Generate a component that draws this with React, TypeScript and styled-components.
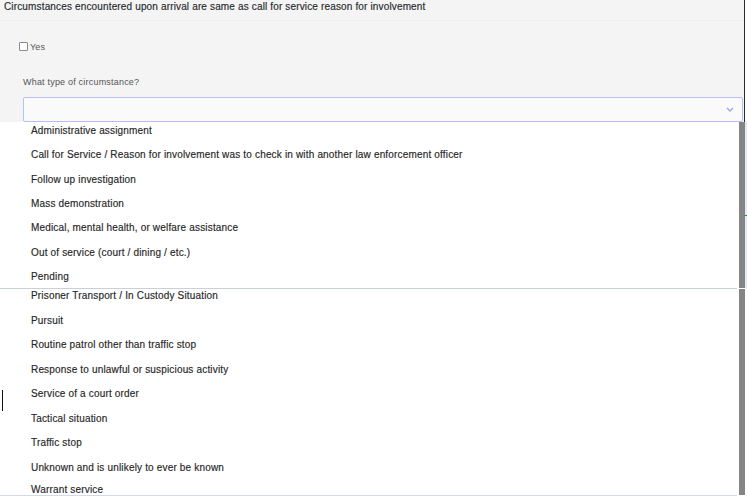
import React from "react";
import styled, { createGlobalStyle } from "styled-components";

const Global = createGlobalStyle`
  html, body { margin: 0; padding: 0; background: #ffffff; }
  body { font-family: "Liberation Sans", Arial, sans-serif; width: 747px; height: 499px; overflow: hidden; }
`;

const Page = styled.div`
  position: relative;
  width: 747px;
  height: 499px;
  display: flex;
  flex-direction: column;
`;

const Panel = styled.div`
  width: 745px;
  height: 122px;
  background: #f4f4f4;
  border-right: 1px solid #2a2a2a;
  box-sizing: border-box;
  display: flex;
  flex-direction: column;
`;

const Title = styled.div`
  height: 21px;
  box-sizing: border-box;
  padding: 1px 0 0 4px;
  font-size: 10px;
  line-height: 12px;
  letter-spacing: 0.15px;
  color: #26292e;
  -webkit-text-stroke: 0.15px #26292e;
  border-bottom: 1px solid #eceef4;
`;

const CheckRow = styled.label`
  display: flex;
  align-items: center;
  gap: 2px;
  margin: 21px 0 0 19px;
  height: 10px;
  font-size: 9px;
  letter-spacing: 0.1px;
  color: #555;
`;

const Box = styled.span`
  width: 7px;
  height: 7px;
  border: 1px solid #8a8a8a;
  border-radius: 1px;
  background: #fff;
`;

const FieldLabel = styled.div`
  margin: 25px 0 0 23px;
  font-size: 9px;
  line-height: 11px;
  letter-spacing: 0.2px;
  color: #555;
`;

const Select = styled.div`
  margin: 9px 0 0 23px;
  width: 720px;
  height: 26px;
  box-sizing: border-box;
  border: 1px solid #b7c0f6;
  border-radius: 2px;
  background: #fafafa;
  display: flex;
  align-items: center;
  justify-content: flex-end;
  padding-right: 8px;
`;

const Section = styled.div<{ $h: number }>`
  height: ${(p) => p.$h}px;
  display: flex;
  overflow: hidden;
  background: #fff;
`;

const List = styled.div<{ $offset: number }>`
  flex: 1;
  margin-top: ${(p) => -p.$offset}px;
`;

const Item = styled.div<{ $h: number; $bottom?: boolean }>`
  height: ${(p) => p.$h}px;
  box-sizing: border-box;
  display: flex;
  align-items: ${(p) => (p.$bottom ? "flex-end" : "center")};
  padding-left: 31px;
  font-size: 10px;
  line-height: 10px;
  letter-spacing: 0.17px;
  color: #262626;
  -webkit-text-stroke: 0.15px #262626;
  white-space: nowrap;
`;

const Thumb = styled.div<{ $w: number; $edge: number }>`
  width: ${(p) => p.$w}px;
  background: #858585;
  border-right: ${(p) => p.$edge}px solid #e4e8f3;
  margin-right: ${(p) => 2 - p.$edge}px;
`;

const Divider = styled.div`
  height: 1px;
  width: 737px;
  background: #c8d0d8;
`;

const BottomLine = styled.div`
  height: 1px;
  width: 737px;
  background: #d2d8ee;
`;

const Cursor = styled.div`
  position: absolute;
  left: 2px;
  top: 390px;
  width: 1px;
  height: 21px;
  background: #111;
`;

const Tick = styled.div`
  position: absolute;
  left: 744px;
  top: 215px;
  width: 3px;
  height: 1px;
  background: #2a9a3a;
`;

const first = [
  "Administrative assignment",
  "Call for Service / Reason for involvement was to check in with another law enforcement officer",
  "Follow up investigation",
  "Mass demonstration",
  "Medical, mental health, or welfare assistance",
  "Out of service (court / dining / etc.)",
  "Pending",
];

const second = [
  "Prisoner Transport / In Custody Situation",
  "Pursuit",
  "Routine patrol other than traffic stop",
  "Response to unlawful or suspicious activity",
  "Service of a court order",
  "Tactical situation",
  "Traffic stop",
  "Unknown and is unlikely to ever be known",
  "Warrant service",
];

export default function App() {
  return (
    <Page>
      <Global />
      <Panel>
        <Title>Circumstances encountered upon arrival are same as call for service reason for involvement</Title>
        <CheckRow>
          <Box />
          Yes
        </CheckRow>
        <FieldLabel>What type of circumstance?</FieldLabel>
        <Select>
          <svg width="8" height="5" viewBox="0 0 8 5">
            <path d="M1 1 L4 4 L7 1" fill="none" stroke="#9ba6e8" strokeWidth="1.3" />
          </svg>
        </Select>
      </Panel>
      <Section $h={166}>
        <List $offset={3.2}>
          {first.map((t) => (
            <Item key={t} $h={24.35}>{t}</Item>
          ))}
        </List>
        <Thumb $w={6} $edge={2} />
      </Section>
      <Divider />
      <Section $h={206}>
        <List $offset={5.25}>
          {second.map((t, i) => {
            const last = i === second.length - 1;
            return (
              <Item key={t} $h={last ? 15.25 : 24.5} $bottom={last}>
                {t}
              </Item>
            );
          })}
        </List>
        <Thumb $w={6} $edge={0} />
      </Section>
      <BottomLine />
      <Cursor />
      <Tick />
    </Page>
  );
}
